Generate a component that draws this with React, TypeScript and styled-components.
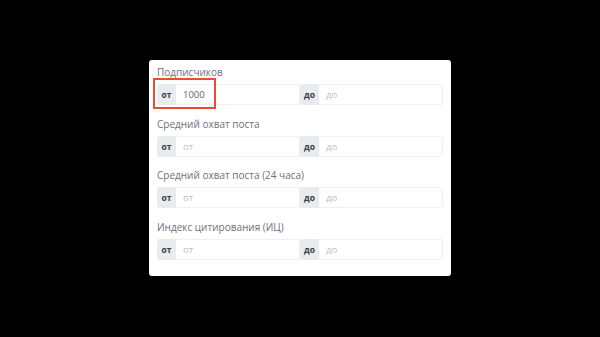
import React from 'react';
import styled, { createGlobalStyle } from 'styled-components';

const GlobalStyle = createGlobalStyle`
  html, body {
    margin: 0;
    padding: 0;
    background: #000;
  }
  body {
    font-family: 'Open Sans', 'Noto Sans', sans-serif;
  }
`;

const Page = styled.div`
  width: 600px;
  height: 337px;
  display: flex;
  justify-content: center;
  padding-top: 60px;
  box-sizing: border-box;
  background: #000;
`;

const Card = styled.div`
  width: 302px;
  height: 216px;
  box-sizing: border-box;
  background: #fff;
  border-radius: 3px;
  padding: 5px 8px 0 8px;
`;

const Field = styled.div`
  margin-bottom: 11.5px;
`;

const Label = styled.div`
  font-size: 10px;
  line-height: 14px;
  color: #6c7179;
  margin-bottom: 5px;
  white-space: nowrap;
`;

const Row = styled.div`
  position: relative;
  display: flex;
  height: 21px;
`;

const Half = styled.div`
  flex: 1;
  display: flex;
  min-width: 0;
`;

const Prefix = styled.span`
  width: 19px;
  flex: none;
  display: flex;
  align-items: center;
  justify-content: center;
  background: #e9ecef;
  color: #363b41;
  font-size: 8.5px;
  font-weight: 700;
  border-radius: 2px 0 0 2px;
`;

const Input = styled.input<{ last?: boolean }>`
  flex: 1;
  min-width: 0;
  box-sizing: border-box;
  height: 21px;
  margin: 0;
  padding: 0 7px;
  border: 1px solid #eef0f2;
  border-left: none;
  border-radius: ${(p) => (p.last ? '0 3px 3px 0' : '0')};
  font-family: inherit;
  font-size: 9.5px;
  color: #5f6369;
  background: #fff;
  outline: none;
  &::placeholder {
    color: #b9bcc0;
  }
`;

const Highlight = styled.div`
  position: absolute;
  left: -4px;
  top: -6px;
  width: 63px;
  height: 31px;
  box-sizing: border-box;
  border: 2px solid #e94b35;
  pointer-events: none;
`;

const fields = [
  { label: 'Подписчиков', from: '1000', marked: true },
  { label: 'Средний охват поста', from: '' },
  { label: 'Средний охват поста (24 часа)', from: '' },
  { label: 'Индекс цитирования (ИЦ)', from: '' },
];

const App = () => (
  <>
    <GlobalStyle />
    <Page>
      <Card>
        {fields.map((f, i) => (
          <Field key={i}>
            <Label>{f.label}</Label>
            <Row>
              <Half>
                <Prefix>от</Prefix>
                <Input placeholder="от" defaultValue={f.from} />
              </Half>
              <Half>
                <Prefix>до</Prefix>
                <Input placeholder="до" last />
              </Half>
              {f.marked && <Highlight />}
            </Row>
          </Field>
        ))}
      </Card>
    </Page>
  </>
);

export default App;
